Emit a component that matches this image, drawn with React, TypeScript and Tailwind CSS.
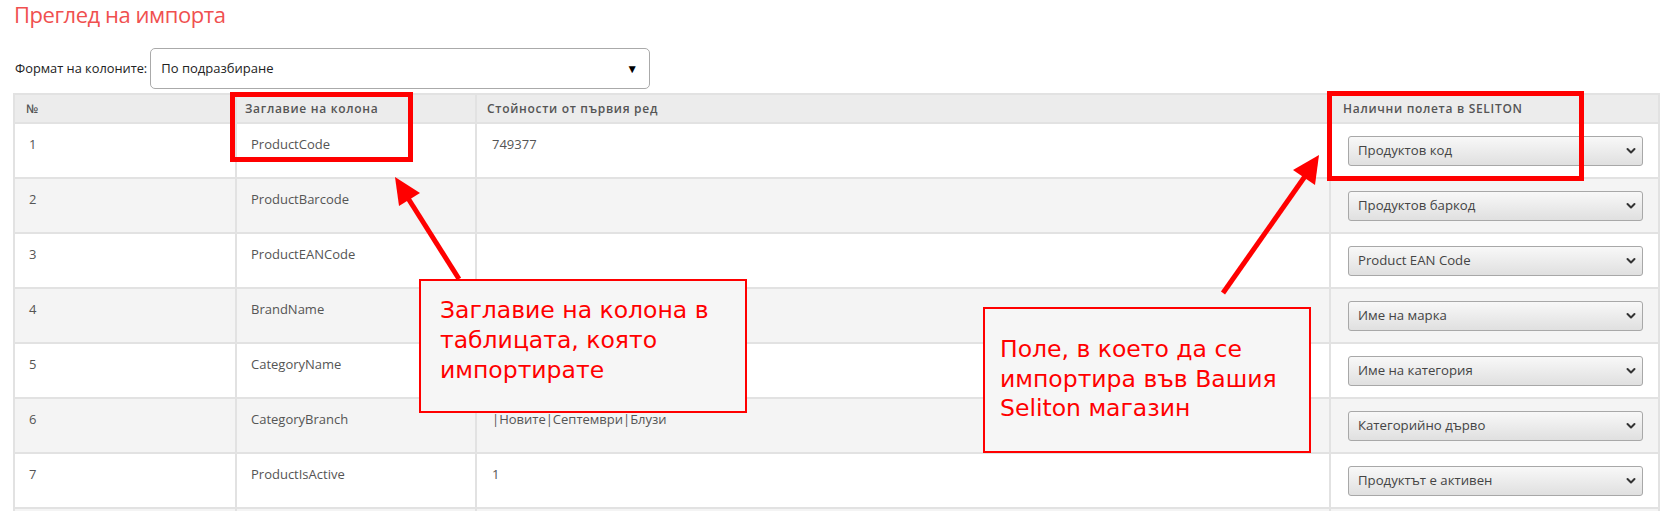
import React from "react";

const rows = [
  { n: "1", name: "ProductCode", val: "749377", sel: "Продуктов код" },
  { n: "2", name: "ProductBarcode", val: "", sel: "Продуктов баркод" },
  { n: "3", name: "ProductEANCode", val: "", sel: "Product EAN Code" },
  { n: "4", name: "BrandName", val: "", sel: "Име на марка" },
  { n: "5", name: "CategoryName", val: "", sel: "Име на категория" },
  { n: "6", name: "CategoryBranch", val: "|Новите|Септември|Блузи", sel: "Категорийно дърво" },
  { n: "7", name: "ProductIsActive", val: "1", sel: "Продуктът е активен" },
];

function Chevron() {
  return (
    <svg width="10" height="8" viewBox="0 0 10 8" className="shrink-0">
      <path d="M1.5 2 L5 5.5 L8.5 2" fill="none" stroke="#333" strokeWidth="2" strokeLinecap="round" strokeLinejoin="round" />
    </svg>
  );
}

export default function App() {
  return (
    <div className="relative w-[1660px] h-[511px] overflow-hidden bg-white text-[#555]" style={{ fontFamily: '"Open Sans", "Noto Sans", sans-serif' }}>
      <div className="pl-[13px]">
        <h1 className="text-[22px] leading-[28px] tracking-[-0.45px] text-[#f0504f] font-normal pl-[1px]">Преглед на импорта</h1>
        <div className="flex items-center mt-[20px] h-[41px]">
          <span className="text-[12.8px] text-[#222] ml-[2px] mr-[3px]">Формат на колоните:</span>
          <div className="flex items-center justify-between w-[500px] h-[41px] border border-[#aaa] rounded-[5px] pl-[10px] pr-[11px] bg-white">
            <span className="text-[13px] text-[#222]">По подразбиране</span>
            <span className="text-[12px] text-black">▼</span>
          </div>
        </div>
        <table className="mt-[4px] w-[1645px] border-collapse table-fixed">
          <colgroup>
            <col className="w-[222px]" />
            <col className="w-[240px]" />
            <col className="w-[854px]" />
            <col className="w-[329px]" />
          </colgroup>
          <thead>
            <tr className="bg-[#ececec] h-[29px]">
              <th className="border-2 border-[#e2e2e2] text-left font-semibold text-[12px] tracking-[0.7px] text-[#555] pl-[11px]">№</th>
              <th className="border-2 border-[#e2e2e2] text-left font-semibold text-[12px] tracking-[0.7px] text-[#555] pl-[8px]">Заглавие на колона</th>
              <th className="border-2 border-[#e2e2e2] text-left font-semibold text-[12px] tracking-[0.7px] text-[#555] pl-[10px]">Стойности от първия ред</th>
              <th className="border-2 border-[#e2e2e2] text-left font-semibold text-[12px] tracking-[0.7px] text-[#555] pl-[12px]">Налични полета в SELITON</th>
            </tr>
          </thead>
          <tbody>
            {rows.map((r, i) => (
              <tr key={r.n} className={i % 2 === 1 ? "bg-[#f4f4f4] h-[55px]" : "bg-white h-[55px]"}>
                <td className="border-2 border-[#e2e2e2] align-top pt-[11px] pl-[14px] text-[13px] leading-[18px]">{r.n}</td>
                <td className="border-2 border-[#e2e2e2] align-top pt-[11px] pl-[14px] text-[13px] leading-[18px]">{r.name}</td>
                <td className="border-2 border-[#e2e2e2] align-top pt-[11px] pl-[15px] text-[13px] leading-[18px]">{r.val}</td>
                <td className="border-2 border-[#e2e2e2] align-top pt-[12px] pl-[17px] pr-[15px]">
                  <div className="flex items-center justify-between h-[30px] rounded-[3px] border border-[#a8a8a8] bg-gradient-to-b from-[#f8f8f8] to-[#e0e0e0] pl-[9px] pr-[6px]">
                    <span className="text-[13.2px] text-[#444]">{r.sel}</span>
                    <Chevron />
                  </div>
                </td>
              </tr>
            ))}
            <tr className="bg-[#f4f4f4] h-[55px]">
              <td className="border-2 border-[#e2e2e2]"></td>
              <td className="border-2 border-[#e2e2e2]"></td>
              <td className="border-2 border-[#e2e2e2]"></td>
              <td className="border-2 border-[#e2e2e2]"></td>
            </tr>
          </tbody>
        </table>
      </div>

      {/* Highlight boxes */}
      <div className="absolute left-[230px] top-[92px] w-[183px] h-[70px] border-[5px] border-[#ff0000]"></div>
      <div className="absolute left-[1327px] top-[91px] w-[257px] h-[90px] border-[5px] border-[#ff0000]"></div>

      {/* Callouts */}
      <div className="absolute left-[419px] top-[279px] w-[328px] h-[134px] border-2 border-[#ff0000] bg-[#f6f6f6] pl-[19px] pt-[14px] text-[#ff0000] text-[23.5px] leading-[30px]" style={{ fontFamily: '"DejaVu Sans", sans-serif' }}>
        Заглавие на колона в<br />таблицата, която<br />импортирате
      </div>
      <div className="absolute left-[983px] top-[307px] w-[328px] h-[146px] border-2 border-[#ff0000] bg-[#f6f6f6] pl-[15px] pt-[26px] text-[#ff0000] text-[23.5px] leading-[29.5px]" style={{ fontFamily: '"DejaVu Sans", sans-serif' }}>
        Поле, в което да се<br />импортира във Вашия<br />Seliton магазин
      </div>

      {/* Arrows */}
      <svg className="absolute left-0 top-0 pointer-events-none" width="1660" height="511">
        <line x1="459" y1="279" x2="406" y2="195" stroke="#ff0000" strokeWidth="5" />
        <polygon points="395,177 420,193 399,206" fill="#ff0000" />
        <line x1="1223" y1="293" x2="1308" y2="172" stroke="#ff0000" strokeWidth="5" />
        <polygon points="1319,155 1315,185 1293,170" fill="#ff0000" />
      </svg>
    </div>
  );
}
